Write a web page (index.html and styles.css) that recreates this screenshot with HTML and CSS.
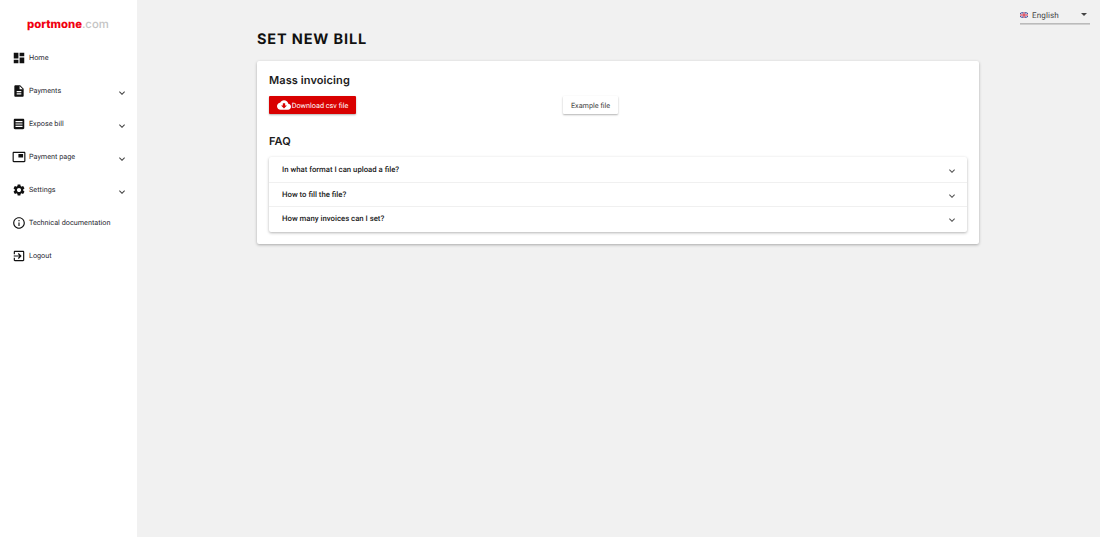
FILE: index.html
```html
<!DOCTYPE html>
<html lang="en">
<head>
<meta charset="utf-8">
<title>Set new bill</title>
<link rel="stylesheet" href="styles.css">
</head>
<body>
<svg class="defs" width="0" height="0" aria-hidden="true">
  <symbol id="more" viewBox="0 0 24 24"><path d="M16.59 8.59L12 13.17 7.41 8.59 6 10l6 6 6-6z"/></symbol>
</svg>
<div class="app">
  <aside class="sidebar">
    <div class="logo"><span class="logo-red">portmone</span><span class="logo-grey">.com</span></div>
    <nav class="nav">
      <a class="nav-item"><svg class="nav-icon" viewBox="0 0 24 24"><path d="M3 13h8V3H3v10zm0 8h8v-6H3v6zm10 0h8V11h-8v10zm0-18v6h8V3h-8z"/></svg><span class="nav-label">Home</span></a>
      <a class="nav-item"><svg class="nav-icon" viewBox="0 0 24 24"><path d="M14 2H6c-1.1 0-1.99.9-1.99 2L4 20c0 1.1.89 2 1.99 2H18c1.1 0 2-.9 2-2V8l-6-6zm2 16H8v-2h8v2zm0-4H8v-2h8v2zm-3-5V3.5L18.5 9H13z"/></svg><span class="nav-label">Payments</span><svg class="nav-more"><use href="#more"/></svg></a>
      <a class="nav-item"><svg class="nav-icon" viewBox="0 0 24 24"><path fill-rule="evenodd" d="M5 3h14c1.1 0 2 .9 2 2v14c0 1.1-.9 2-2 2H5c-1.1 0-2-.9-2-2V5c0-1.100.9-2 2-2zm1 4v2h12V7H6zm0 4v2h12v-2H6zm0 4v2h12v-2H6z"/></svg><span class="nav-label">Expose bill</span><svg class="nav-more"><use href="#more"/></svg></a>
      <a class="nav-item"><svg class="nav-icon" viewBox="0 0 24 24"><path d="M19 7h-8v6h8V7zm2-4H3c-1.1 0-2 .9-2 2v14c0 1.1.9 1.98 2 1.98h18c1.1 0 2-.88 2-1.98V5c0-1.1-.9-2-2-2zm0 16.010H3V4.980h18v14.030z"/></svg><span class="nav-label">Payment page</span><svg class="nav-more"><use href="#more"/></svg></a>
      <a class="nav-item"><svg class="nav-icon" viewBox="0 0 24 24"><path d="M19.14 12.94c.04-.3.06-.61.06-.94 0-.32-.02-.64-.07-.94l2.03-1.58c.18-.14.23-.41.12-.61l-1.92-3.32c-.12-.22-.37-.29-.59-.22l-2.39.96c-.5-.38-1.03-.7-1.62-.94l-.36-2.54c-.04-.24-.24-.41-.48-.41h-3.84c-.24 0-.43.17-.47.41l-.36 2.54c-.59.24-1.13.57-1.62.94l-2.39-.96c-.22-.08-.47 0-.59.22L2.74 8.87c-.12.21-.08.47.12.61l2.03 1.58c-.05.3-.09.63-.09.94s.02.64.07.94l-2.03 1.58c-.18.14-.23.41-.12.61l1.92 3.32c.12.22.37.29.59.22l2.39-.96c.5.38 1.03.7 1.62.94l.36 2.54c.05.24.24.41.48.41h3.84c.24 0 .44-.17.47-.41l.36-2.54c.59-.24 1.13-.56 1.62-.94l2.39.96c.22.08.47 0 .59-.22l1.92-3.32c.12-.22.07-.47-.12-.61l-2.010-1.580zM12 15.600c-1.980 0-3.600-1.620-3.600-3.600s1.620-3.600 3.600-3.600 3.600 1.620 3.600 3.600-1.620 3.600-3.600 3.600z"/></svg><span class="nav-label">Settings</span><svg class="nav-more"><use href="#more"/></svg></a>
      <a class="nav-item"><svg class="nav-icon" viewBox="0 0 24 24"><path d="M11 7h2v2h-2zm0 4h2v6h-2zm1-9C6.480 2 2 6.480 2 12s4.480 10 10 10 10-4.480 10-10S17.520 2 12 2zm0 18c-4.410 0-8-3.590-8-8s3.590-8 8-8 8 3.590 8 8-3.590 8-8 8z"/></svg><span class="nav-label nav-label-long">Technical documentation</span></a>
      <a class="nav-item"><svg class="nav-icon" viewBox="0 0 24 24"><path d="M10.090 15.590L11.500 17l5-5-5-5-1.410 1.410L12.670 11H3v2h9.670l-2.580 2.590zM19 3H5c-1.110 0-2 .9-2 2v4h2V5h14v14H5v-4H3v4c0 1.100.89 2 2 2h14c1.100 0 2-.9 2-2V5c0-1.100-.9-2-2-2z"/></svg><span class="nav-label">Logout</span></a>
    </nav>
  </aside>
  <main class="main">
    <div class="topbar">
      <div class="lang">
        <svg class="flag" viewBox="0 0 10 7"><rect width="10" height="7" fill="#3c4f9f"/><path d="M0 0l10 7M10 0L0 7" stroke="#e9e4ea" stroke-width="1.200"/><path d="M5 0v7M0 3.500h10" stroke="#e9e4ea" stroke-width="2.200"/><path d="M5 0v7M0 3.500h10" stroke="#d7263d" stroke-width="1.200"/></svg>
        <span class="lang-name">English</span>
        <span class="caret"></span>
      </div>
    </div>
    <div class="content">
      <h1 class="page-title">SET NEW BILL</h1>
      <section class="card">
        <h2 class="card-title">Mass invoicing</h2>
        <div class="actions">
          <button class="btn btn-primary"><svg class="btn-icon" viewBox="0 0 24 24"><path d="M19.350 10.040C18.670 6.590 15.640 4 12 4 9.110 4 6.600 5.640 5.350 8.040 2.340 8.360 0 10.910 0 14c0 3.310 2.690 6 6 6h13c2.760 0 5-2.240 5-5 0-2.640-2.050-4.780-4.650-4.960zM17 13l-5 5-5-5h3V9h4v4h3z"/></svg>Download csv file</button>
          <button class="btn btn-plain">Example file</button>
        </div>
        <h2 class="card-title faq-title">FAQ</h2>
        <div class="faq">
          <div class="faq-row"><span>In what format I can upload a file?</span><svg class="faq-more"><use href="#more"/></svg></div>
          <div class="faq-row"><span>How to fill the file?</span><svg class="faq-more"><use href="#more"/></svg></div>
          <div class="faq-row"><span>How many invoices can I set?</span><svg class="faq-more"><use href="#more"/></svg></div>
        </div>
      </section>
    </div>
  </main>
</div>
</body>
</html>
```
FILE: styles.css
```css
* { box-sizing: border-box; }
html, body { height: 100%; }
body {
  margin: 0;
  background: #f1f1f1;
  font-family: Roboto, "Liberation Sans", sans-serif;
  color: #222;
  overflow: hidden;
  text-rendering: geometricPrecision;
}
.defs { display: block; height: 0; }
.app { display: flex; height: 537px; }

.sidebar {
  width: 137px;
  flex: none;
  background: #fff;
}
.logo {
  height: 41px;
  padding: 16px 0 0 27px;
  font-family: Inter, "Liberation Sans", sans-serif;
  font-size: 11.300px;
  line-height: 16px;
  white-space: nowrap;
}
.logo-red { color: #f00010; font-weight: 800; }
.logo-grey { color: #c4c4c4; font-weight: 500; }

.nav { display: flex; flex-direction: column; }
.nav-item {
  height: 33px;
  display: flex;
  align-items: center;
  padding-left: 12px;
  color: #2b2b33;
}
.nav-icon { width: 14px; height: 14px; flex: none; fill: #111; }
.nav-label { margin-left: 3px; font-size: 7.250px; white-space: nowrap; }
.nav-more {
  width: 12px;
  height: 12px;
  margin-left: auto;
  margin-right: 9px;
  margin-top: 4px;
  fill: #444;
}

.main { flex: 1; min-width: 0; padding-right: 1px; }
.topbar { display: flex; justify-content: flex-end; padding: 8px 9px 0 0; height: 24px; }
.lang {
  width: 70px;
  height: 16px;
  display: flex;
  align-items: center;
  border-bottom: 1px solid #bbb;
  box-shadow: 0 1px 0 #d0d0d0;
  padding-bottom: 2px;
}
.flag { width: 8px; height: 6px; flex: none; }
.lang-name { margin-left: 4px; font-size: 8.100px; color: #444; letter-spacing: .1px; }
.caret {
  margin: 0 3px 0 auto;
  border-left: 3px solid transparent;
  border-right: 3px solid transparent;
  border-top: 3px solid #444;
}

.content { width: 722px; margin: 0 auto; }
.page-title {
  margin: 7px 0 12px;
  font-family: Inter, "Liberation Sans", sans-serif;
  font-size: 14.500px;
  line-height: 18px;
  font-weight: 700;
  color: #111;
  letter-spacing: .85px;
}
.card {
  background: #fff;
  height: 183px;
  padding: 12px 12px 0;
  border-radius: 2px;
  box-shadow: 0 1px 3px rgba(0, 0, 0, .3);
}
.card-title {
  margin: 0;
  font-family: Inter, "Liberation Sans", sans-serif;
  font-size: 11px;
  line-height: 14px;
  font-weight: 600;
  color: #1c1c1c;
  letter-spacing: .1px;
}
.actions {
  width: 50%;
  display: flex;
  justify-content: space-between;
  margin-top: 9px;
}
.btn {
  height: 18px;
  border: 0;
  border-radius: 1px;
  padding: 0;
  font-family: Roboto, "Liberation Sans", sans-serif;
  font-size: 7.250px;
  display: flex;
  align-items: center;
  justify-content: center;
  box-shadow: 0 1px 2px rgba(0, 0, 0, .3);
  text-rendering: geometricPrecision;
}
.btn-primary { width: 87px; background: #d90000; color: #fff; gap: 1px; }
.btn-icon { width: 14px; height: 14px; fill: #fff; }
.btn-plain { width: 55px; background: #fff; color: #444; }
.faq-title { margin-top: 20px; }
.faq {
  margin-top: 9px;
  padding-bottom: 1px;
  border-radius: 2px;
  box-shadow: 0 1px 3px rgba(0, 0, 0, .3);
}
.faq-row {
  height: 24.500px;
  display: flex;
  align-items: center;
  justify-content: space-between;
  padding: 0 9px 0 13px;
  font-size: 7.750px;
  font-weight: 500;
  color: #222;
  border-top: 1px solid #f0f0f0;
}
.faq-row:first-child { border-top: 0; }
.faq-more { width: 12px; height: 12px; margin-top: 3px; fill: #555; }
```
